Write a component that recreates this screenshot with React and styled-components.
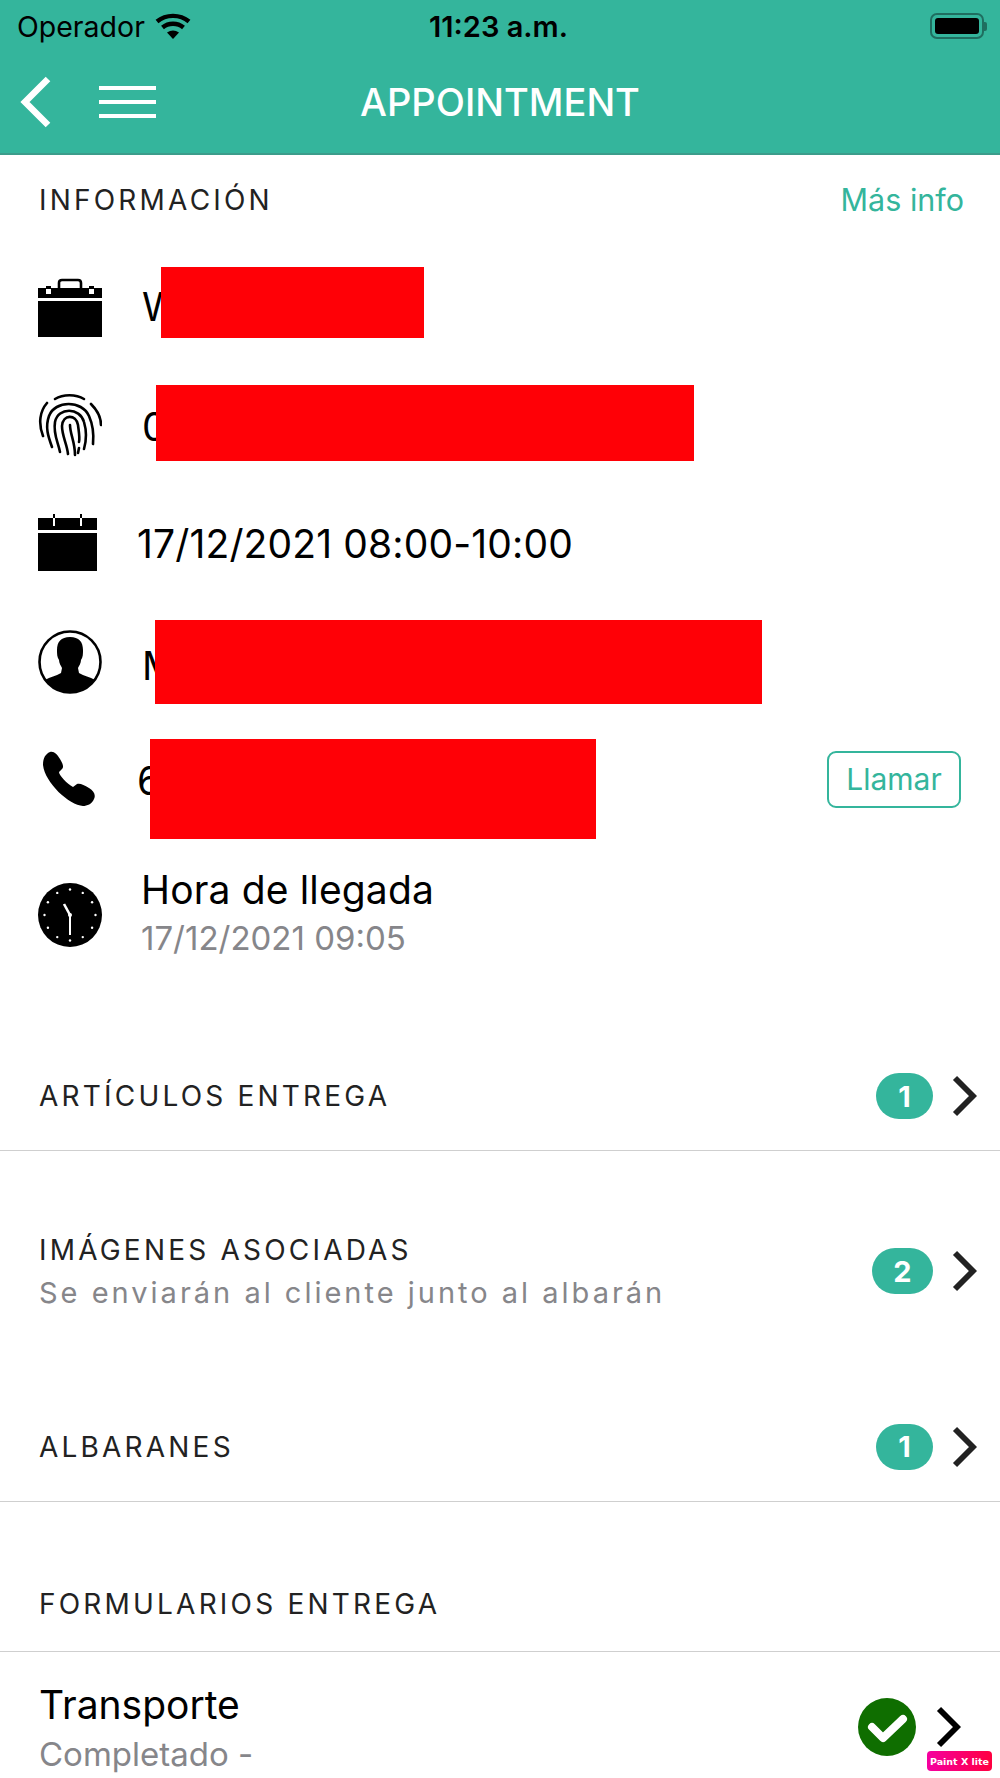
import React from "react";
import styled, { createGlobalStyle } from "styled-components";

const GREEN = "#34b59c";

const Global = createGlobalStyle`
  html, body { margin: 0; padding: 0; background: #fff; }
  body { font-family: Inter, "Noto Sans", "Liberation Sans", sans-serif; }
`;

const Page = styled.div`
  position: relative;
  width: 1000px;
  height: 1778px;
  overflow: hidden;
  background: #fff;
`;

const Header = styled.header`
  height: 155px;
  box-sizing: border-box;
  background: ${GREEN};
  border-bottom: 2px solid #3c9c8b;
`;

const StatusBar = styled.div`
  height: 52px;
  display: grid;
  grid-template-columns: 1fr auto 1fr;
  align-items: center;
  padding: 0 13px 0 17px;
  color: #000;
`;

const Carrier = styled.div`
  display: flex;
  align-items: center;
  gap: 10px;
  font-size: 28.5px;
`;

const Clock = styled.div`
  font-size: 29px;
  font-weight: 600;
  margin-right: 7px;
`;

const Battery = styled.div`
  justify-self: end;
  display: flex;
  align-items: center;
`;

const BatteryBody = styled.div`
  width: 54px;
  height: 26px;
  box-sizing: border-box;
  padding: 3px;
  border: 2px solid #1f6e60;
  border-radius: 7px;
  &::before {
    content: "";
    display: block;
    height: 100%;
    background: #000;
    border-radius: 3px;
  }
`;

const BatteryCap = styled.div`
  width: 3px;
  height: 9px;
  background: #1f6e60;
  border-radius: 0 2px 2px 0;
`;

const NavBar = styled.div`
  height: 100px;
  display: grid;
  grid-template-columns: 1fr auto 1fr;
  align-items: center;
  padding-bottom: 2px;
`;

const NavLeft = styled.div`
  display: flex;
  align-items: center;
  gap: 47px;
  padding-left: 20px;
`;

const Burger = styled.div`
  width: 57px;
  display: flex;
  flex-direction: column;
  gap: 10px;
  span {
    height: 4px;
    background: #fff;
  }
`;

const Title = styled.h1`
  margin: 0;
  color: #fff;
  font-size: 38px;
  font-weight: 500;
`;

const InfoHead = styled.div`
  height: 91px;
  box-sizing: border-box;
  padding: 0 36px 2px 39px;
  display: flex;
  align-items: center;
  justify-content: space-between;
`;

const Label = styled.div`
  color: #222;
  font-size: 28px;
  font-weight: 400;
  letter-spacing: 3.2px;
  white-space: nowrap;
`;

const MoreLink = styled.a`
  color: ${GREEN};
  font-size: 30.5px;
`;

const InfoRow = styled.div`
  position: relative;
  height: ${(p) => p.$h}px;
  display: flex;
  align-items: center;
  padding-right: 38px;
`;

const IconCell = styled.div`
  width: ${(p) => p.$w || 142}px;
  flex: none;
  padding-left: ${(p) => p.$pad || 38}px;
  margin-bottom: ${(p) => p.$lift || 0}px;
  box-sizing: border-box;
  display: flex;
`;

const Value = styled.div`
  flex: 1;
  color: #000;
  font-size: 39px;
  letter-spacing: 0.15px;
  white-space: nowrap;
`;

const Redact = styled.div`
  position: absolute;
  left: ${(p) => p.$x}px;
  top: ${(p) => p.$y}px;
  width: ${(p) => p.$w}px;
  height: ${(p) => p.$hh}px;
  background: #ff0006;
`;

const CallButton = styled.button`
  width: 134px;
  height: 57px;
  margin: 0 1px 2px 0;
  box-sizing: border-box;
  background: #fff;
  border: 2px solid ${GREEN};
  border-radius: 9px;
  color: ${GREEN};
  font: 400 30px Inter, sans-serif;
  padding: 0;
`;

const Stack = styled.div`
  flex: 1;
  display: flex;
  flex-direction: column;
  margin-bottom: ${(p) => p.$lift || 0}px;
`;

const Sub = styled.div`
  margin-top: ${(p) => p.$gap || 0}px;
  color: #86868a;
  font-size: ${(p) => p.$size || 33}px;
  letter-spacing: ${(p) => p.$ls || 0}px;
  white-space: nowrap;
`;

const SectionRow = styled.div`
  height: ${(p) => p.$h}px;
  margin-top: ${(p) => p.$top || 0}px;
  box-sizing: border-box;
  padding: 0 23px ${(p) => p.$pb || 0}px 39px;
  display: flex;
  align-items: center;
  justify-content: space-between;
  border-bottom: ${(p) => (p.$line ? "1px solid #cfcfcf" : "none")};
`;

const Right = styled.div`
  display: flex;
  align-items: center;
  gap: 19px;
`;

const Badge = styled.div`
  width: ${(p) => p.$w || 57}px;
  height: 46px;
  border-radius: 23px;
  background: ${GREEN};
  color: #fff;
  font-size: 29px;
  font-weight: 700;
  display: flex;
  align-items: center;
  justify-content: center;
`;

const Name = styled.div`
  color: #000;
  font-size: 39px;
`;

const FormRight = styled.div`
  display: flex;
  align-items: center;
  gap: 20px;
  margin-right: 16px;
`;

const Watermark = styled.div`
  position: absolute;
  left: 927px;
  top: 1751px;
  width: 65px;
  height: 20px;
  border-radius: 4px;
  background: linear-gradient(90deg, #f500a0, #ff0040);
  color: #fff;
  font: 700 9.5px "DejaVu Sans", sans-serif;
  display: flex;
  align-items: center;
  justify-content: center;
  white-space: nowrap;
`;

const Wifi = () => (
  <svg width="36" height="26" viewBox="0 0 36 26" fill="none" stroke="#000" strokeWidth="4.4">
    <path d="M2 8.5 C11 1 25 1 34 8.5" />
    <path d="M7.5 14.5 C13.5 9.5 22.5 9.5 28.5 14.5" />
    <path d="M12 19.6 L18 26 L24 19.6 C20 16.8 16 16.8 12 19.6 Z" fill="#000" stroke="none" />
  </svg>
);

const BackArrow = () => (
  <svg width="32" height="52" viewBox="0 0 32 52" fill="none" stroke="#fff" strokeWidth="6.5">
    <path d="M28 3 L5 26 L28 49" />
  </svg>
);

const Chevron = ({ color = "#222", w = 25, h = 42 }) => (
  <svg width={w} height={h} viewBox="0 0 25 42" fill="none" stroke={color} strokeWidth="5.8">
    <path d="M3 3 L21 21 L3 39" />
  </svg>
);

const Briefcase = () => (
  <svg width="64" height="60" viewBox="0 0 64 60">
    <path d="M21 10 V5 Q21 2 24 2 H40 Q43 2 43 5 V10" fill="none" stroke="#000" strokeWidth="2.6" />
    <path d="M0 10 H8 V8 H13 V10 H51 V8 H56 V10 H64 V20 H0 Z" fill="#000" />
    <rect x="8" y="11" width="5" height="5" fill="#fff" />
    <rect x="51" y="11" width="5" height="5" fill="#fff" />
    <rect x="0" y="23" width="64" height="36" fill="#000" />
  </svg>
);

const FingerprintIcon = () => (
  <svg width="64" height="66" viewBox="0 0 64 66" fill="none" stroke="#000" strokeWidth="2.6" strokeLinecap="round">
    <path d="M17 7 C25 2 38 2 46 7" />
    <path d="M9 11 C2 19 0 31 5 44" />
    <path d="M53 12 C59 18 63 26 63 33" />
    <path d="M14 55 C10 44 7 35 11 24 C17 8 44 8 51 24 C55 33 56 42 55 52" />
    <path d="M22 60 C20 50 15 42 17 30 C20 15 42 15 46 30 C49 40 48 50 46 57" />
    <path d="M30 62 C29 52 24 44 24 34 C25 22 38 22 40 33 C41 41 42 46 41 50" />
    <path d="M32 33 C32 42 37 50 37 63" />
    <path d="M41 56 L40 61" />
  </svg>
);

const CalendarIcon = () => (
  <svg width="59" height="59" viewBox="0 0 59 59">
    <rect x="0" y="5" width="59" height="12" fill="#000" />
    <rect x="0" y="20" width="59" height="38" fill="#000" />
    <path d="M16 1 V5 M43 1 V5" stroke="#000" strokeWidth="2" />
    <path d="M16 5 V13 M43 5 V13" stroke="#fff" strokeWidth="2" />
  </svg>
);

const UserIcon = () => (
  <svg width="64" height="64" viewBox="0 0 64 64">
    <defs>
      <clipPath id="userClip">
        <circle cx="32" cy="32" r="30" />
      </clipPath>
    </defs>
    <g clipPath="url(#userClip)">
      <path
        d="M32 7 C41 7 45 12 45 20 C45 24 45 27 43 30 C43 33 41 36 40 38 L41 43 C46 46 52 47 57 50 L60 66 H4 L7 50 C12 47 18 46 23 43 L24 38 C23 36 21 33 21 30 C19 27 19 24 19 20 C19 12 23 7 32 7 Z"
        fill="#000"
      />
    </g>
    <circle cx="32" cy="32" r="30.5" fill="none" stroke="#000" strokeWidth="2.6" />
  </svg>
);

const PhoneIcon = () => (
  <svg width="53" height="55" viewBox="0 0 53 55">
    <path
      d="M8 1 C12 0 15 3 18 8 C21 13 22 16 20 18 L17 21 C17 24 25 33 31 36 L35 33 C38 32 42 34 47 37 C52 40 54 44 52 48 C50 53 45 55 41 55 C27 54 3 32 1 14 C1 8 3 3 8 1 Z"
      fill="#000"
    />
  </svg>
);

const clockDots = Array.from({ length: 12 }, (_, i) => {
  const a = (i * Math.PI) / 6;
  return { x: 32 + 25.5 * Math.sin(a), y: 32 - 25.5 * Math.cos(a) };
});

const ClockIcon = () => (
  <svg width="64" height="64" viewBox="0 0 64 64">
    <circle cx="32" cy="32" r="32" fill="#000" />
    {clockDots.map((d, i) => (
      <circle key={i} cx={d.x} cy={d.y} r="1.2" fill="#fff" />
    ))}
    <path d="M32 32 V52" stroke="#fff" strokeWidth="2" />
    <path d="M32 32 L26 21" stroke="#fff" strokeWidth="2.6" />
    <circle cx="32" cy="32" r="2" fill="#fff" />
  </svg>
);

const CheckBadge = () => (
  <svg width="58" height="58" viewBox="0 0 58 58">
    <circle cx="29" cy="29" r="29" fill="#0f6e00" />
    <path d="M14 29 L25 40 L45 21" fill="none" stroke="#fff" strokeWidth="8" strokeLinejoin="round" strokeLinecap="round" />
  </svg>
);

export default function App() {
  return (
    <Page>
      <Global />
      <Header>
        <StatusBar>
          <Carrier>
            Operador
            <Wifi />
          </Carrier>
          <Clock>11:23 a.m.</Clock>
          <Battery>
            <BatteryBody />
            <BatteryCap />
          </Battery>
        </StatusBar>
        <NavBar>
          <NavLeft>
            <BackArrow />
            <Burger>
              <span />
              <span />
              <span />
            </Burger>
          </NavLeft>
          <Title>APPOINTMENT</Title>
        </NavBar>
      </Header>

      <InfoHead>
        <Label>INFORMACIÓN</Label>
        <MoreLink>Más info</MoreLink>
      </InfoHead>

      <InfoRow $h={120}>
        <IconCell $lift={-3}>
          <Briefcase />
        </IconCell>
        <Value>W</Value>
        <Redact $x={161} $y={21} $w={263} $hh={71} />
      </InfoRow>
      <InfoRow $h={120}>
        <IconCell $lift={2}>
          <FingerprintIcon />
        </IconCell>
        <Value>0</Value>
        <Redact $x={156} $y={19} $w={538} $hh={76} />
      </InfoRow>
      <InfoRow $h={114}>
        <IconCell $w={137} $lift={2}>
          <CalendarIcon />
        </IconCell>
        <Value>17/12/2021 08:00-10:00</Value>
      </InfoRow>
      <InfoRow $h={130}>
        <IconCell $lift={6}>
          <UserIcon />
        </IconCell>
        <Value>M</Value>
        <Redact $x={155} $y={20} $w={607} $hh={84} />
      </InfoRow>
      <InfoRow $h={100}>
        <IconCell $w={137} $pad={42} $lift={4}>
          <PhoneIcon />
        </IconCell>
        <Value>6</Value>
        <Redact $x={150} $y={9} $w={446} $hh={100} />
        <CallButton>Llamar</CallButton>
      </InfoRow>
      <InfoRow $h={170}>
        <IconCell $w={141}>
          <ClockIcon />
        </IconCell>
        <Stack $lift={6}>
          <Value>Hora de llegada</Value>
          <Sub $gap={5}>17/12/2021 09:05</Sub>
        </Stack>
      </InfoRow>

      <SectionRow $h={108} $top={43} $line $pb={1}>
        <Label>ARTÍCULOS ENTREGA</Label>
        <Right>
          <Badge>1</Badge>
          <Chevron />
        </Right>
      </SectionRow>

      <SectionRow $h={240}>
        <Stack>
          <Label>IMÁGENES ASOCIADAS</Label>
          <Sub $gap={8} $size={29} $ls={3}>
            Se enviarán al cliente junto al albarán
          </Sub>
        </Stack>
        <Right>
          <Badge $w={61}>2</Badge>
          <Chevron />
        </Right>
      </SectionRow>

      <SectionRow $h={106} $top={5} $line $pb={4}>
        <Label>ALBARANES</Label>
        <Right>
          <Badge>1</Badge>
          <Chevron />
        </Right>
      </SectionRow>

      <SectionRow $h={96} $top={54} $line>
        <Label>FORMULARIOS ENTREGA</Label>
      </SectionRow>

      <SectionRow $h={150}>
        <Stack>
          <Name>Transporte</Name>
          <Sub $gap={6}>Completado -</Sub>
        </Stack>
        <FormRight>
          <CheckBadge />
          <Chevron color="#000" />
        </FormRight>
      </SectionRow>

      <Watermark>Paint X lite</Watermark>
    </Page>
  );
}
